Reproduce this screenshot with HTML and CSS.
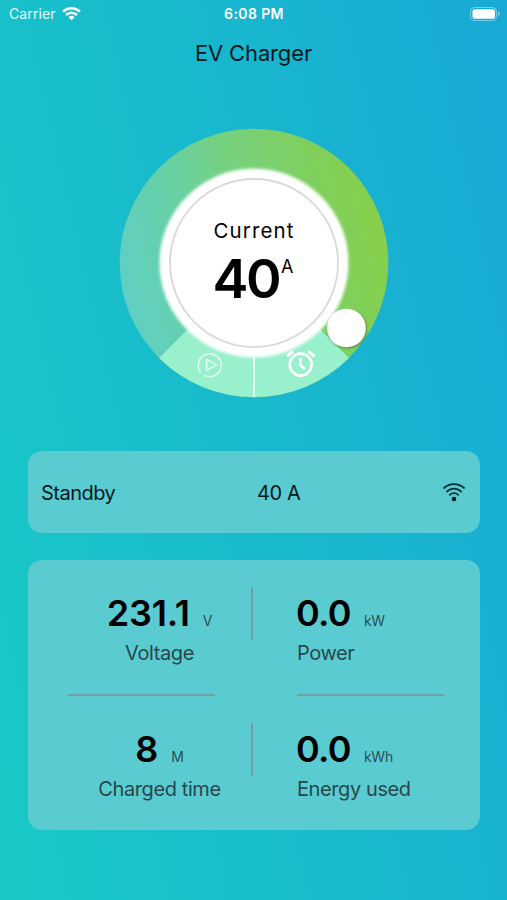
FILE: index.html
```html
<!DOCTYPE html>
<html lang="en">
<head>
  <meta charset="UTF-8">
  <meta name="viewport" content="width=device-width, initial-scale=1.0">
  <title>EV Charger</title>
  <link rel="stylesheet" href="styles.css">
</head>
<body>
  <div class="status-bar">
    <div class="carrier">
      <span>Carrier</span>
      <svg width="19" height="14" viewBox="0 0 19 14" fill="none" stroke="#fff" stroke-width="2.5">
        <path d="M1 4.7a12.2 12.2 0 0 1 17 0"/>
        <path d="M4 8a8 8 0 0 1 11 0"/>
        <path d="M9.5 13.3L6.5 10.3a4.3 4.3 0 0 1 6 0z" fill="#fff" stroke="none"/>
      </svg>
    </div>
    <span class="time">6:08 PM</span>
    <svg class="battery" width="31" height="14" viewBox="0 0 31 14">
      <rect x="0.5" y="0.5" width="26" height="13" rx="4" fill="none" stroke="#fff" stroke-opacity="0.4"/>
      <rect x="2.5" y="2.3" width="22.5" height="9.4" rx="2.2" fill="#fff"/>
      <path d="M28 4.6c2.4 1 2.4 3.8 0 4.8z" fill="#fff" fill-opacity="0.4"/>
    </svg>
  </div>

  <h1>EV Charger</h1>

  <div class="dial">
    <svg width="270" height="270" viewBox="0 0 270 270">
      <defs>
        <linearGradient id="ring" x1="0" y1="0.62" x2="1" y2="0.38">
          <stop offset="0" stop-color="#5fcfc6"/>
          <stop offset="0.25" stop-color="#66d0a8"/>
          <stop offset="0.5" stop-color="#76d07e"/>
          <stop offset="0.78" stop-color="#80cf5e"/>
          <stop offset="1" stop-color="#88cf48"/>
        </linearGradient>
        <filter id="glow" x="-20%" y="-20%" width="140%" height="140%">
          <feGaussianBlur stdDeviation="1.7"/>
        </filter>
        <filter id="shadow" x="-20%" y="-20%" width="150%" height="150%">
          <feDropShadow dx="0.8" dy="1" stdDeviation="0.8" flood-color="#24521c" flood-opacity="0.6"/>
        </filter>
      </defs>
      <circle cx="135" cy="135" r="134.3" fill="url(#ring)"/>
      <!-- play / timer buttons -->
      <path d="M135 135L229.9 229.9A134.3 134.3 0 0 1 40.1 229.9z" fill="#99f0cc"/>
      <path d="M135 220v49" stroke="#e2fbf1" stroke-width="2"/>
      <circle cx="135" cy="135" r="94.5" fill="#fff" filter="url(#glow)"/>
      <circle cx="135" cy="135" r="84" fill="#fff" stroke="#dcd8da" stroke-width="1.8"/>
      <g fill="none" stroke="#e2fcf1" stroke-width="1.6">
        <path d="M81.6 244.2A11.5 11.5 0 1 1 85.4 247.4"/>
        <path d="M87.6 231.2v11.4l9.8-5.7z" stroke-linejoin="round"/>
      </g>
      <g fill="none" stroke="#fff" stroke-width="2.6">
        <circle cx="181.7" cy="236.6" r="11"/>
        <path d="M181.3 230v7l4.6 4.3"/>
        <path d="M168 228.4l6-5.3M189.4 223.1l6 5.3" stroke-width="3"/>
      </g>
      <circle cx="227.4" cy="200" r="19.3" fill="#fff" filter="url(#shadow)"/>
    </svg>
    <div class="reading">
      <div class="reading-label">Current</div>
      <div class="reading-value">40<sup>A</sup></div>
    </div>
  </div>

  <div class="card state">
    <span>Standby</span>
    <span class="amps">40 A</span>
    <svg width="22" height="19" viewBox="0 0 22 19" fill="none" stroke="#062f36" stroke-width="1.8" stroke-linecap="round">
      <path d="M1 5a15 15 0 0 1 20 0"/>
      <path d="M3.9 8.5a10.4 10.4 0 0 1 14.2 0"/>
      <path d="M6.8 11.8a6.2 6.2 0 0 1 8.4 0"/>
      <circle cx="11" cy="16" r="2.3" fill="#00171c" stroke="none"/>
    </svg>
  </div>

  <div class="card stats">
    <div class="stat centered">
      <div class="number">231.1<span class="unit">V</span></div>
      <div class="name">Voltage</div>
    </div>
    <div class="stat">
      <div class="number narrow">0.0<span class="unit">kW</span></div>
      <div class="name">Power</div>
    </div>
    <div class="stat centered">
      <div class="number">8<span class="unit">M</span></div>
      <div class="name">Charged time</div>
    </div>
    <div class="stat">
      <div class="number narrow">0.0<span class="unit">kWh</span></div>
      <div class="name">Energy used</div>
    </div>
  </div>
</body>
</html>
```

FILE: styles.css
```css
* {
  box-sizing: border-box;
}
body {
  margin: 0;
  height: 900px;
  overflow: hidden;
  font-family: Inter, "Liberation Sans", sans-serif;
  color: #03191d;
  background: linear-gradient(77deg, #18cac5 0%, #18a9d5 100%);
}
svg {
  display: block;
}
.status-bar {
  display: grid;
  grid-template-columns: 1fr auto 1fr;
  align-items: center;
  height: 27px;
  padding: 0 6px 0 9px;
  color: #fff;
  font-size: 14px;
}
.carrier {
  display: flex;
  align-items: center;
  gap: 6px;
  color: #e4f9fb;
  letter-spacing: 0.1px;
}
.time {
  margin-right: 2px;
  font-weight: 600;
  letter-spacing: 0.4px;
}
.battery {
  justify-self: end;
}
h1 {
  margin: 0;
  height: 52px;
  line-height: 52px;
  font-size: 22px;
  font-weight: 400;
  letter-spacing: -0.15px;
  text-align: center;
}
.dial {
  display: grid;
  width: 270px;
  height: 270px;
  margin: 49px auto 53px 119px;
}
.dial > * {
  grid-area: 1 / 1;
}
.reading {
  padding-top: 88px;
  text-align: center;
  color: #000;
}
.reading-label {
  font-size: 20.5px;
  line-height: 30px;
  letter-spacing: 1.1px;
}
.reading-value {
  display: flex;
  justify-content: center;
  padding-right: 2px;
  font-size: 54px;
  font-weight: 600;
  line-height: 66px;
  letter-spacing: -2.5px;
}
.reading-value sup {
  margin-left: 2px;
  font-size: 18px;
  font-weight: 400;
  line-height: 42px;
  letter-spacing: 0;
}
.card {
  width: 452px;
  margin-left: 28px;
  border-radius: 14px;
  background: #5acbd1;
}
.state {
  display: grid;
  grid-template-columns: 216px 1fr auto;
  align-items: center;
  height: 82px;
  padding: 1px 15px 0 13px;
  font-size: 20px;
  letter-spacing: -0.5px;
}
.amps {
  letter-spacing: -0.4px;
}
.stats {
  display: grid;
  grid-template-columns: 147px 147px;
  grid-template-rows: 109px 108px;
  gap: 27px 82px;
  height: 270px;
  margin-top: 27px;
  padding: 27px 36px 0 40px;
}
.stat {
  border-bottom: 2px solid #75a0a3;
}
.stat:nth-child(n+3) {
  border-bottom: none;
}
.centered {
  position: relative;
  display: flex;
  flex-direction: column;
  align-items: center;
  padding-left: 36px;
  white-space: nowrap;
}
.centered::after {
  content: "";
  position: absolute;
  top: 0;
  right: -38px;
  width: 2px;
  height: 53px;
  background: #75a0a3;
}
.number {
  height: 53px;
  line-height: 53px;
  font-size: 36px;
  font-weight: 600;
  letter-spacing: -0.2px;
  color: #000;
}
.narrow {
  margin-left: -1px;
  letter-spacing: -0.7px;
}
.unit {
  margin-left: 13px;
  font-size: 14px;
  font-weight: 400;
  letter-spacing: -0.2px;
  color: #2a4f54;
}
.name {
  line-height: 27px;
  font-size: 20px;
  letter-spacing: -0.4px;
  color: #27474b;
}
```
